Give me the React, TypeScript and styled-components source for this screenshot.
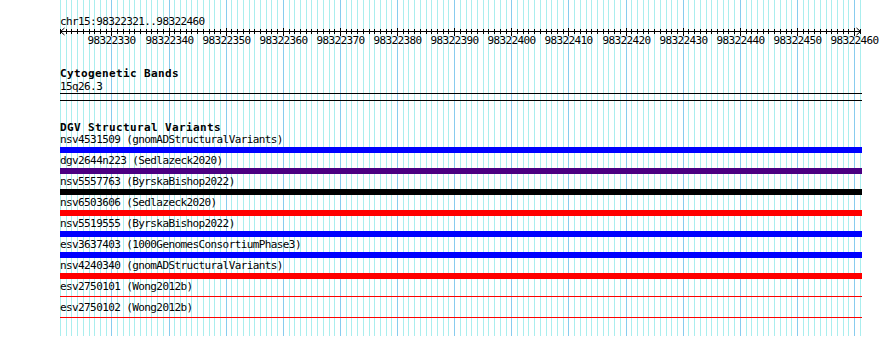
import React from "react";
import styled, { createGlobalStyle } from "styled-components";

// Layout constants for the base-pair scale

const START = 98322321;
const BASES = 140;
const LEFT = 60;
const BP = 5.713;
const TRACK_W = 802;

const xAt = (i: number) => Math.round(LEFT + i * BP) + 0.5;

const GlobalStyle = createGlobalStyle`
  html, body {
    margin: 0;
    padding: 0;
    background: #fff;
  }
  body {
    font-family: "DejaVu Sans Mono", "Liberation Mono", monospace;
    font-size: 11px;
    letter-spacing: -0.6px;
    color: #000;
  }
`;

const Page = styled.div`
  position: relative;
  width: 890px;
  height: 357px;
  overflow: hidden;
`;

const GridLayer = styled.svg`
  position: absolute;
  left: 0;
  top: 0;
  z-index: 0;
`;

const Content = styled.div`
  position: relative;
  z-index: 1;
  padding: 15px 0 0 ${LEFT}px;
  width: ${TRACK_W}px;
`;

const Location = styled.div`
  height: 13px;
  line-height: 13px;
  white-space: pre;
`;

const RulerSvg = styled.svg`
  display: block;
  margin-left: -${LEFT}px;
  overflow: visible;
`;

const TrackHeader = styled.div<{ $mt: number; $lh?: number }>`
  margin-top: ${(p) => p.$mt}px;
  height: ${(p) => p.$lh ?? 13}px;
  line-height: ${(p) => p.$lh ?? 13}px;
  font-weight: bold;
  letter-spacing: 0.38px;
  white-space: pre;
`;

const BandLabel = styled.div`
  height: 13px;
  line-height: 13px;
`;

const BandBox = styled.div`
  height: 6px;
  border-top: 1px solid #000;
  border-bottom: 1px solid #000;
`;

const FeatureRow = styled.div`
  height: 21px;
  display: flex;
  flex-direction: column;
`;

const FeatureLabel = styled.div`
  height: 14px;
  line-height: 14px;
  white-space: pre;
`;

const BarSlot = styled.div`
  height: 6px;
  display: flex;
  flex-direction: column;
`;

const Bar = styled.div<{ $color: string; $thin?: boolean }>`
  background: ${(p) => p.$color};
  height: ${(p) => (p.$thin ? 1 : 6)}px;
  margin-top: ${(p) => (p.$thin ? 2 : 0)}px;
`;

// Data

const variants = [
  { id: "nsv4531509", src: "gnomADStructuralVariants", color: "#0000ff" },
  { id: "dgv2644n223", src: "Sedlazeck2020", color: "#4b0082" },
  { id: "nsv5557763", src: "ByrskaBishop2022", color: "#000000" },
  { id: "nsv6503606", src: "Sedlazeck2020", color: "#ff0000" },
  { id: "nsv5519555", src: "ByrskaBishop2022", color: "#0000ff" },
  { id: "esv3637403", src: "1000GenomesConsortiumPhase3", color: "#0000ff" },
  { id: "nsv4240340", src: "gnomADStructuralVariants", color: "#ff0000" },
  { id: "esv2750101", src: "Wong2012b", color: "#ff0000", thin: true },
  { id: "esv2750102", src: "Wong2012b", color: "#ff0000", thin: true },
];

const Grid: React.FC = () => {
  const lines = [];
  for (let i = 0; i <= BASES; i++) {
    lines.push(
      <line
        key={i}
        x1={xAt(i)}
        x2={xAt(i)}
        y1={0}
        y2={336}
        stroke={i % 10 === 9 ? "#88ccee" : "#aaeeee"}
        strokeWidth={1}
      />
    );
  }
  return (
    <GridLayer width={890} height={357} shapeRendering="crispEdges">
      {lines}
    </GridLayer>
  );
};

const Ruler: React.FC = () => {
  const y = 3.5;
  const ticks = [];
  const labels = [];
  for (let i = 0; i <= BASES; i++) {
    const major = i % 10 === 9;
    ticks.push(
      <line
        key={i}
        x1={xAt(i)}
        x2={xAt(i)}
        y1={major ? 0 : 1}
        y2={major ? 8 : 6}
        stroke="#000"
      />
    );
    if (major) {
      labels.push(
        <text key={i} x={xAt(i)} y={16} textAnchor="middle">
          {START + i}
        </text>
      );
    }
  }
  const x0 = xAt(0);
  const x1 = xAt(BASES);
  return (
    <RulerSvg width={890} height={22}>
      <g shapeRendering="crispEdges">
        <line x1={x0} x2={x1} y1={y} y2={y} stroke="#000" />
        {ticks}
      </g>
      <polyline
        points={`${x0 + 4},${y - 3.5} ${x0},${y} ${x0 + 4},${y + 3.5}`}
        fill="none"
        stroke="#000"
      />
      <polyline
        points={`${x1 - 4},${y - 3.5} ${x1},${y} ${x1 - 4},${y + 3.5}`}
        fill="none"
        stroke="#000"
      />
      <g
        fontFamily='"DejaVu Sans Mono", "Liberation Mono", monospace'
        fontSize={11}
        letterSpacing={-0.6}
        fill="#000"
      >
        {labels}
      </g>
    </RulerSvg>
  );
};

const App: React.FC = () => {
  return (
    <Page>
      <GlobalStyle />
      <Grid />
      <Content>
        <Location>chr15:98322321..98322460</Location>
        <Ruler />

        <TrackHeader $mt={17}>Cytogenetic Bands</TrackHeader>
        <BandLabel>15q26.3</BandLabel>
        <BandBox />

        <TrackHeader $mt={22} $lh={10}>
          DGV Structural Variants
        </TrackHeader>
        {variants.map((v) => (
          <FeatureRow key={v.id}>
            <FeatureLabel>
              {v.id} ({v.src})
            </FeatureLabel>
            <BarSlot>
              <Bar $color={v.color} $thin={v.thin} />
            </BarSlot>
          </FeatureRow>
        ))}
      </Content>
    </Page>
  );
};

export default App;
